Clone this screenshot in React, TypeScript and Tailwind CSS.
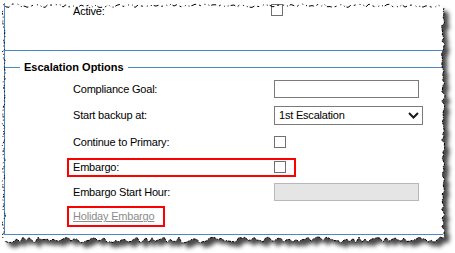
import React from "react";

function rng(seed: number) {
  let s = seed;
  return () => {
    s = (s * 16807) % 2147483647;
    return s / 2147483647;
  };
}

function buildEdges() {
  const r = rng(12345);
  const top: [number, number][] = [];
  for (let x = 3; x <= 443; x += 3) top.push([x, 4 + r() * 3.5]);
  const right: [number, number][] = [];
  for (let y = 8; y <= 238; y += 3) right.push([441.5 + r() * 3.5, y]);
  const bottom: [number, number][] = [];
  for (let x = 443; x >= 3; x -= 3) bottom.push([x, 237 + r() * 6]);
  const left: [number, number][] = [];
  for (let y = 238; y >= 8; y -= 3) left.push([2 + r() * 3.5, y]);
  return { top, right, bottom, left };
}

const toPts = (p: [number, number][]) => p.map(([x, y]) => `${x.toFixed(1)},${y.toFixed(1)}`).join(" ");

function Checkbox() {
  return <span className="block w-[12px] h-[12px] border border-[#707070] bg-white" />;
}

export default function App() {
  const e = buildEdges();
  const all = [...e.top, ...e.right, ...e.bottom, ...e.left];
  const poly = toPts(all);
  return (
    <div className="relative w-[455px] h-[253px] bg-white overflow-hidden text-[11px] tracking-[-0.2px] text-black font-['Liberation_Sans',Arial,sans-serif]">
      <svg className="absolute inset-0 pointer-events-none" width="455" height="253">
        <defs>
          <filter id="blur" x="-10%" y="-10%" width="120%" height="120%">
            <feGaussianBlur stdDeviation="2.2" />
          </filter>
        </defs>
        <polygon points={poly} transform="translate(5,5)" fill="#4a4a4a" filter="url(#blur)" />
        <polygon points={poly} fill="#ffffff" />
      </svg>

      <div className="relative pl-[4px] pt-[3px]">
        <div className="w-[439px] border-l border-[#4a88c8]">
          <div className="h-[47px]">
            <div className="grid grid-cols-[266px_1fr] items-center h-[12px]">
              <span className="pl-[68px] leading-[12px] pt-[2px]">Active:</span>
              <Checkbox />
            </div>
          </div>
          <div className="border-t border-[#4a88c8]" />
          <fieldset className="mt-[9px] border-t border-b border-[#4a88c8] pt-[2px] pb-[6px]">
            <legend className="ml-[15px] px-[4px] font-bold text-[11px] tracking-normal leading-[14px] text-black">
              Escalation Options
            </legend>
            <div className="grid grid-cols-[269px_1fr] items-center h-[26px]">
              <span className="pl-[68px]">Compliance Goal:</span>
              <span className="block w-[145px] h-[18px] border border-[#7a7a7a] bg-white" />
            </div>
            <div className="grid grid-cols-[269px_1fr] items-center h-[27px]">
              <span className="pl-[68px]">Start backup at:</span>
              <div className="flex items-center justify-between w-[149px] h-[19px] border border-[#7a7a7a] bg-white pl-[4px] pr-[3px]">
                <span>1st Escalation</span>
                <svg width="11" height="7" viewBox="0 0 11 7">
                  <polyline points="1,1 5.5,5.5 10,1" fill="none" stroke="#1a1a1a" strokeWidth="2" />
                </svg>
              </div>
            </div>
            <div className="grid grid-cols-[269px_1fr] items-center h-[26px]">
              <span className="pl-[68px]">Continue to Primary:</span>
              <Checkbox />
            </div>
            <div className="flex items-center h-[24px]">
              <div className="ml-[62px] flex items-center w-[229px] h-[19px] border-2 border-[#ff0000] pl-[4px]">
                <span className="w-[201px]">Embargo:</span>
                <Checkbox />
              </div>
            </div>
            <div className="grid grid-cols-[269px_1fr] items-center h-[26px]">
              <span className="pl-[68px]">Embargo Start Hour:</span>
              <span className="block w-[145px] h-[18px] border border-[#b8b8b8] bg-[#e5e5e5]" />
            </div>
            <div className="flex items-center h-[23px]">
              <div className="ml-[62px] flex items-center w-[98px] h-[21px] border-2 border-[#ff0000] pl-[4px]">
                <span className="text-[#8c8c8c] underline">Holiday Embargo</span>
              </div>
            </div>
          </fieldset>
        </div>
      </div>

      <svg className="absolute inset-0 pointer-events-none" width="455" height="253">
        <polyline points={toPts(e.top)} fill="none" stroke="#000" strokeWidth="1" strokeDasharray="1 2 5 3 2 4 1 3" />
        <polyline points={toPts(e.right)} fill="none" stroke="#000" strokeWidth="1" strokeDasharray="2 1 1 1 3 1" />
        <polyline points={toPts(e.bottom)} fill="none" stroke="#000" strokeWidth="1" strokeDasharray="3 1 1 2 2 1" />
        <polyline points={toPts(e.left)} fill="none" stroke="#000" strokeWidth="1" strokeDasharray="1 2 2 1 1 3" />
      </svg>
    </div>
  );
}
